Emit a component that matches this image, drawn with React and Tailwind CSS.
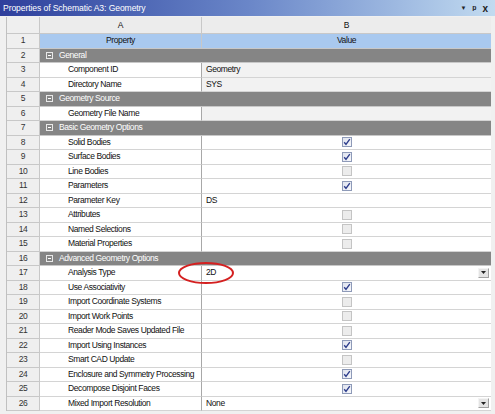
import React from 'react';

const rows = [
  { t: 'head' },
  { t: 'cat', label: 'General' },
  { label: 'Component ID', value: 'Geometry', ro: true },
  { label: 'Directory Name', value: 'SYS', ro: true },
  { t: 'cat', label: 'Geometry Source' },
  { label: 'Geometry File Name', value: '', ro: true },
  { t: 'cat', label: 'Basic Geometry Options' },
  { label: 'Solid Bodies', check: true },
  { label: 'Surface Bodies', check: true },
  { label: 'Line Bodies', check: false },
  { label: 'Parameters', check: true },
  { label: 'Parameter Key', value: 'DS' },
  { label: 'Attributes', check: false },
  { label: 'Named Selections', check: false },
  { label: 'Material Properties', check: false },
  { t: 'cat', label: 'Advanced Geometry Options' },
  { label: 'Analysis Type', value: '2D', drop: true },
  { label: 'Use Associativity', check: true },
  { label: 'Import Coordinate Systems', check: false },
  { label: 'Import Work Points', check: false },
  { label: 'Reader Mode Saves Updated File', check: false },
  { label: 'Import Using Instances', check: true },
  { label: 'Smart CAD Update', check: false },
  { label: 'Enclosure and Symmetry Processing', check: true },
  { label: 'Decompose Disjoint Faces', check: true },
  { label: 'Mixed Import Resolution', value: 'None', drop: true },
];

const Checkbox = ({ on }) => (
  on ? (
    <div className="w-[10px] h-[10px] border border-[#8e9ab8] bg-gradient-to-br from-[#dfe3ee] to-[#f6f7fb] flex items-center justify-center">
      <svg width="8" height="8" viewBox="0 0 8 8">
        <path d="M1.2 4.2 L3 6.4 L6.8 1.2" fill="none" stroke="#2d3d8c" strokeWidth="1.4" />
      </svg>
    </div>
  ) : (
    <div className="w-[10px] h-[10px] border border-[#c4c4c4] bg-[#ececec]" />
  )
);

const DropBtn = () => (
  <div className="w-[11px] h-[10px] bg-[#e4e4e4] border border-[#a0a0a0] border-t-[#f4f4f4] border-l-[#f4f4f4] flex items-center justify-center">
    <svg width="5" height="3" viewBox="0 0 5 3"><path d="M0 0 L5 0 L2.5 3 Z" fill="#222" /></svg>
  </div>
);

const App = () => {
  return (
    <div className="w-[495px] h-[414px] bg-[#f0f0f0] overflow-hidden font-['Liberation_Sans',Arial,sans-serif] text-[8.5px] text-[#111] relative">
      <div className="h-[16px] flex items-center justify-between bg-gradient-to-r from-[#2f3f9c] via-[#6a86c8] to-[#c2dbf0] px-[3px]">
        <span className="text-white text-[8.6px] tracking-[-0.1px]">Properties of Schematic A3: Geometry</span>
        <div className="flex items-center gap-[6px] pr-[4px] text-[#222] text-[10px]">
          <span className="text-[6px]">▼</span>
          <span className="font-bold">ᵖ</span>
          <span className="font-bold">x</span>
        </div>
      </div>
      <div className="mt-[1px] ml-[6px] w-[484px] border-l border-[#c0c0c0] grid grid-cols-[33px_162px_289px] tracking-[-0.4px]">
        <div className="h-[17px] bg-[#efefef] border-r border-b border-[#c8c8c8]" />
        <div className="h-[17px] bg-[#ececec] border-r border-b border-[#c8c8c8] flex items-center justify-center">A</div>
        <div className="h-[17px] bg-[#ececec] border-b border-[#c8c8c8] flex items-center justify-center">B</div>
        {rows.map((r, i) => {
          const num = (
            <div key={`n${i}`} className="h-[14.5px] bg-[#efefef] border-r border-b border-[#c8c8c8] flex items-center justify-center text-[#333]">
              {i + 1}
            </div>
          );
          if (r.t === 'head') {
            return (
              <React.Fragment key={i}>
                {num}
                <div className="h-[14.5px] bg-[#a9c9ef] border-r border-b border-[#c8c8c8] flex items-center justify-center">Property</div>
                <div className="h-[14.5px] bg-[#a9c9ef] border-b border-[#c8c8c8] flex items-center justify-center">Value</div>
              </React.Fragment>
            );
          }
          if (r.t === 'cat') {
            return (
              <React.Fragment key={i}>
                {num}
                <div className="col-span-2 h-[14.5px] bg-[#858585] border-b border-[#c8c8c8] flex items-center pl-[6px] text-white gap-[6px]">
                  <div className="w-[7px] h-[7px] border border-[#e8e8e8] flex items-center justify-center">
                    <div className="w-[3px] h-[1px] bg-white" />
                  </div>
                  <span>{r.label}</span>
                </div>
              </React.Fragment>
            );
          }
          return (
            <React.Fragment key={i}>
              {num}
              <div className="h-[14.5px] bg-white border-r border-b border-r-[#a8a8a8] border-b-[#d4d4d4] flex items-center pl-[28px] whitespace-nowrap">{r.label}</div>
              <div className={`h-[14.5px] ${r.ro ? 'bg-[#f2f2f2]' : 'bg-white'} border-b border-[#d4d4d4] flex items-center ${r.check !== undefined ? 'justify-center' : 'justify-between pl-[4px] pr-[2px]'}`}>
                {r.check !== undefined ? <Checkbox on={r.check} /> : <span>{r.value}</span>}
                {r.drop && <DropBtn />}
              </div>
            </React.Fragment>
          );
        })}
      </div>
      <svg className="absolute left-[176px] top-[261px]" width="60" height="24" viewBox="0 0 60 24">
        <ellipse cx="30" cy="12" rx="27" ry="10" fill="none" stroke="#d42020" strokeWidth="2" />
      </svg>
    </div>
  );
};

export default App;
